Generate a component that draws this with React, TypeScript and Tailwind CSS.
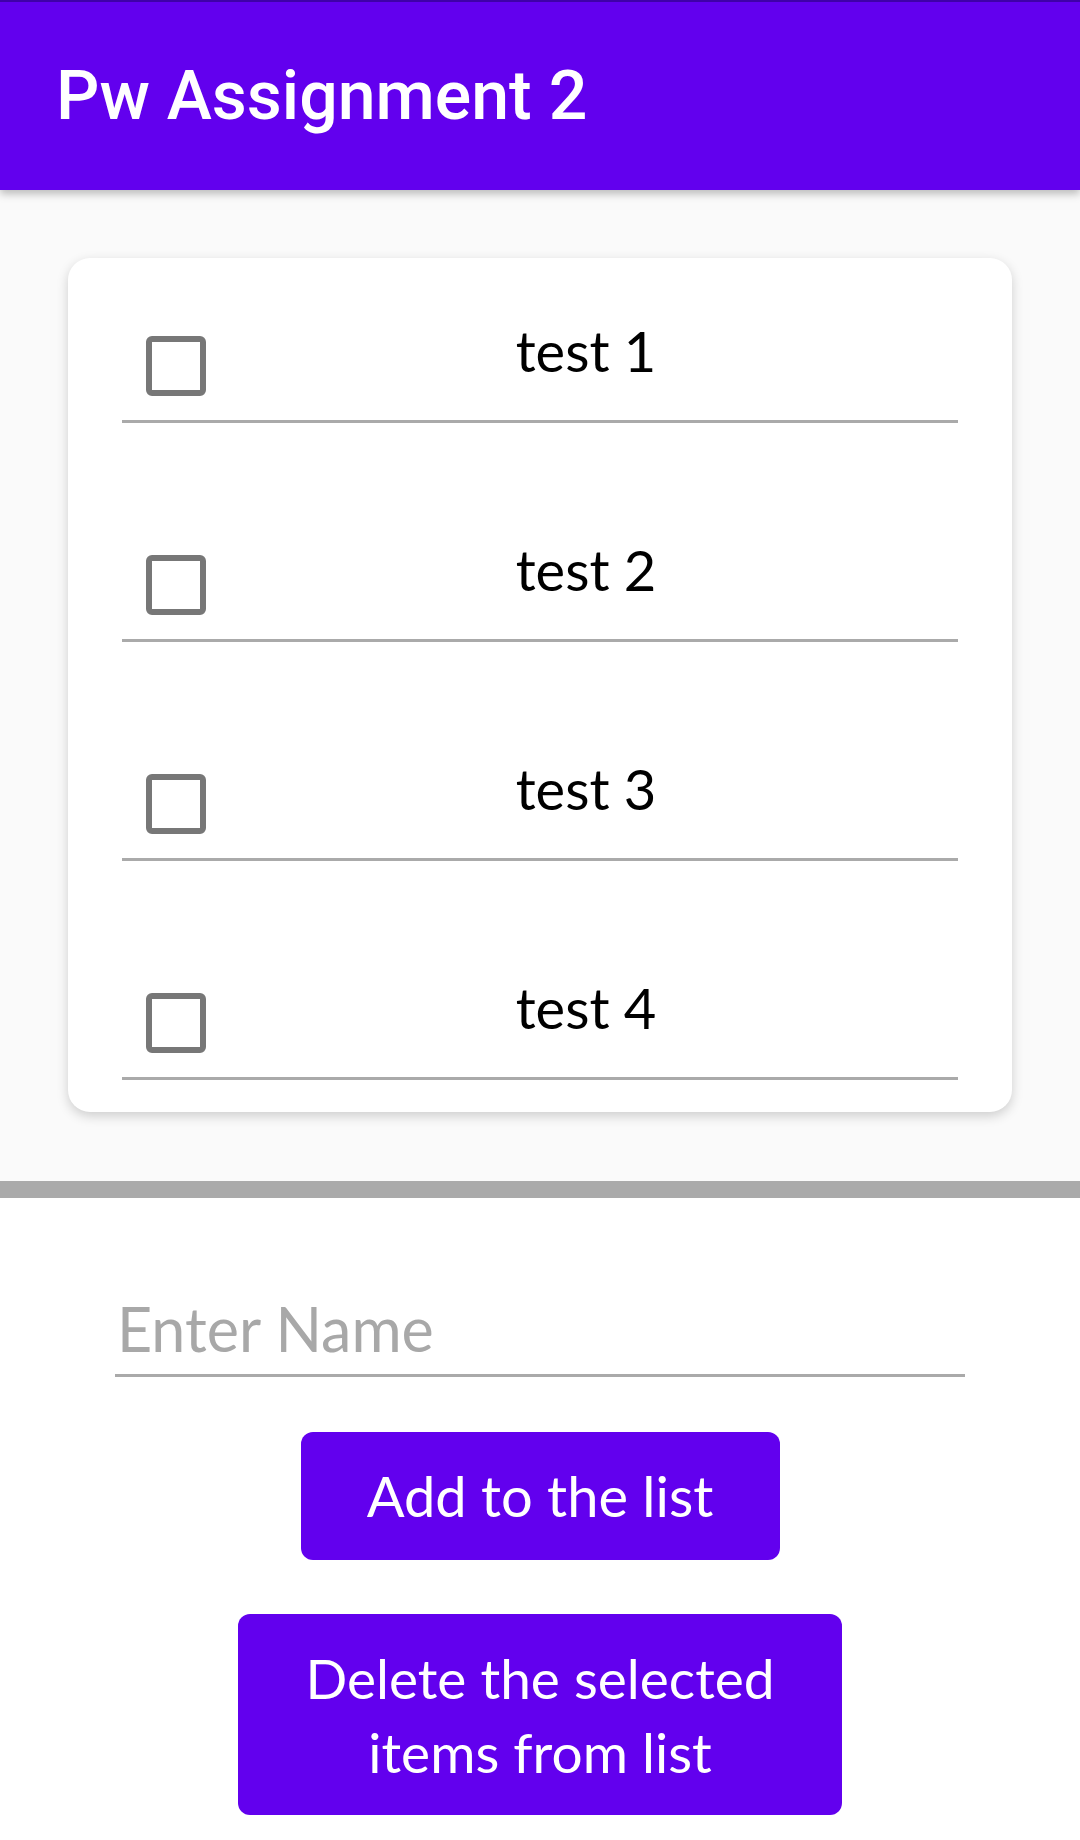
import { useState } from 'react'

const items = ['test 1', 'test 2', 'test 3', 'test 4']

const body = { fontFamily: 'Lato, "Open Sans", sans-serif' }

export default function App() {
  const [checked, setChecked] = useState<boolean[]>(items.map(() => false))
  const [name, setName] = useState('')

  return (
    <div className="flex min-h-[1840px] w-[1080px] flex-col bg-white">
      {/* app bar */}
      <header
        className="relative z-10 flex h-[190px] items-center border-t-2 border-[#3f00a8] bg-[#6200ee] pl-[56px] shadow-[0_4px_8px_rgba(0,0,0,0.25)]"
        style={{ fontFamily: 'Roboto, sans-serif' }}
      >
        <h1 className="text-[68px] font-medium leading-none text-white">Pw Assignment 2</h1>
      </header>

      {/* list area */}
      <section className="bg-[#fafafa] px-[68px] pb-[69px] pt-[68px]">
        <div className="flex flex-col gap-[78px] rounded-[22px] bg-white px-[54px] pb-[32px] pt-[24px] shadow-[0_4px_12px_rgba(0,0,0,0.18)]">
          {items.map((it, i) => (
            <div key={it} className="flex items-start border-b-[3px] border-[#aaaaaa] pb-[24px] pt-[37px]">
              <button
                onClick={() => setChecked((c) => c.map((v, j) => (j === i ? !v : v)))}
                className="ml-[24px] mt-[17px] flex h-[60px] w-[60px] shrink-0 items-center justify-center rounded-[6px] border-[6px] border-[#777777] bg-white"
              >
                {checked[i] && <span className="h-[30px] w-[30px] rounded-[2px] bg-[#777777]" />}
              </button>
              <span className="flex-1 pl-[8px] text-center text-[56px] leading-[64px] text-black" style={body}>
                {it}
              </span>
            </div>
          ))}
        </div>
      </section>

      <div className="h-[17px] bg-[#aaaaaa]" />

      {/* form */}
      <section className="flex flex-col items-center pt-[96px]" style={body}>
        <input
          value={name}
          onChange={(e) => setName(e.target.value)}
          placeholder="Enter Name"
          className="h-[83px] w-[850px] border-b-[3px] border-[#aaaaaa] bg-transparent pb-[12px] pl-[2px] text-[61px] leading-[70px] text-black outline-none placeholder:text-[#a8a8a8]"
        />
        <button className="mt-[55px] flex h-[128px] w-[479px] items-center justify-center rounded-[12px] bg-[#6200ee] text-[56px] leading-none text-white">
          Add to the list
        </button>
        <button className="mt-[54px] flex h-[201px] w-[604px] items-center justify-center rounded-[12px] bg-[#6200ee] px-[40px] text-center text-[55px] leading-[74px] text-white">
          Delete the selected
          <br />
          items from list
        </button>
      </section>
    </div>
  )
}
